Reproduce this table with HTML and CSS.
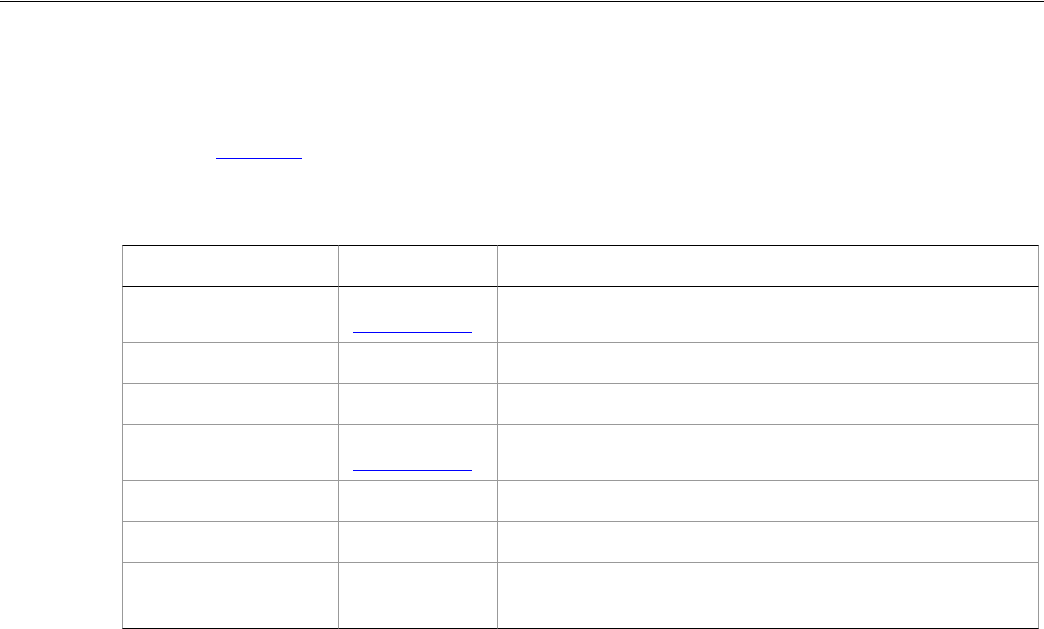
FILE: index.html
```html
<!DOCTYPE html>
<html lang="en">
<head>
<meta charset="utf-8">
<title>Page</title>
<link rel="stylesheet" href="styles.css">
</head>
<body>
<div class="rule"></div>
<main class="content">
  <p class="intro"><a class="link link-intro" href="#"></a></p>
  <table class="grid">
    <thead>
      <tr class="h42">
        <th class="c1"></th>
        <th class="c2"></th>
        <th class="c3"></th>
      </tr>
    </thead>
    <tbody>
      <tr class="h56">
        <td></td>
        <td><a class="link link-cell" href="#"></a></td>
        <td></td>
      </tr>
      <tr class="h41"><td></td><td></td><td></td></tr>
      <tr class="h41"><td></td><td></td><td></td></tr>
      <tr class="h56">
        <td></td>
        <td><a class="link link-cell" href="#"></a></td>
        <td></td>
      </tr>
      <tr class="h41"><td></td><td></td><td></td></tr>
      <tr class="h41"><td></td><td></td><td></td></tr>
      <tr class="h66 last"><td></td><td></td><td></td></tr>
    </tbody>
  </table>
</main>
</body>
</html>
```

FILE: styles.css
```css
html, body {
  margin: 0;
  padding: 0;
  background: #fff;
  font-family: "Liberation Sans", Arial, sans-serif;
  font-size: 13px;
  color: #000;
}

.rule {
  margin-top: 1px;
  height: 1px;
  background: #000;
}

.content {
  padding: 0 5px 0 122px;
}

.intro {
  margin: 156px 0 0 94px;
  height: 1px;
  line-height: 0;
}

.link {
  display: inline-block;
  height: 1px;
  background: #0000ff;
  vertical-align: top;
}

.link-intro {
  width: 86px;
}

.link-cell {
  width: 119px;
  margin-top: 38px;
}

.grid {
  margin-top: 86px;
  border-collapse: separate;
  border-spacing: 0;
  table-layout: fixed;
  width: 917px;
}

.grid th,
.grid td {
  box-sizing: border-box;
  padding: 7px 14px;
  vertical-align: top;
  border-left: 1px solid #999;
  border-bottom: 1px solid #999;
  line-height: 0;
}

.grid th:last-child,
.grid td:last-child {
  border-right: 1px solid #999;
}

.grid th {
  border-top: 1px solid #000;
  border-bottom: 1px solid #000;
}

.grid .last td {
  border-bottom: 1px solid #000;
}

.c1 { width: 216px; }
.c2 { width: 159px; }
.c3 { width: 542px; }

.h42 th { height: 42px; }
.h41 td { height: 41px; }
.h56 td { height: 56px; }
.h66 td { height: 66px; }
```
